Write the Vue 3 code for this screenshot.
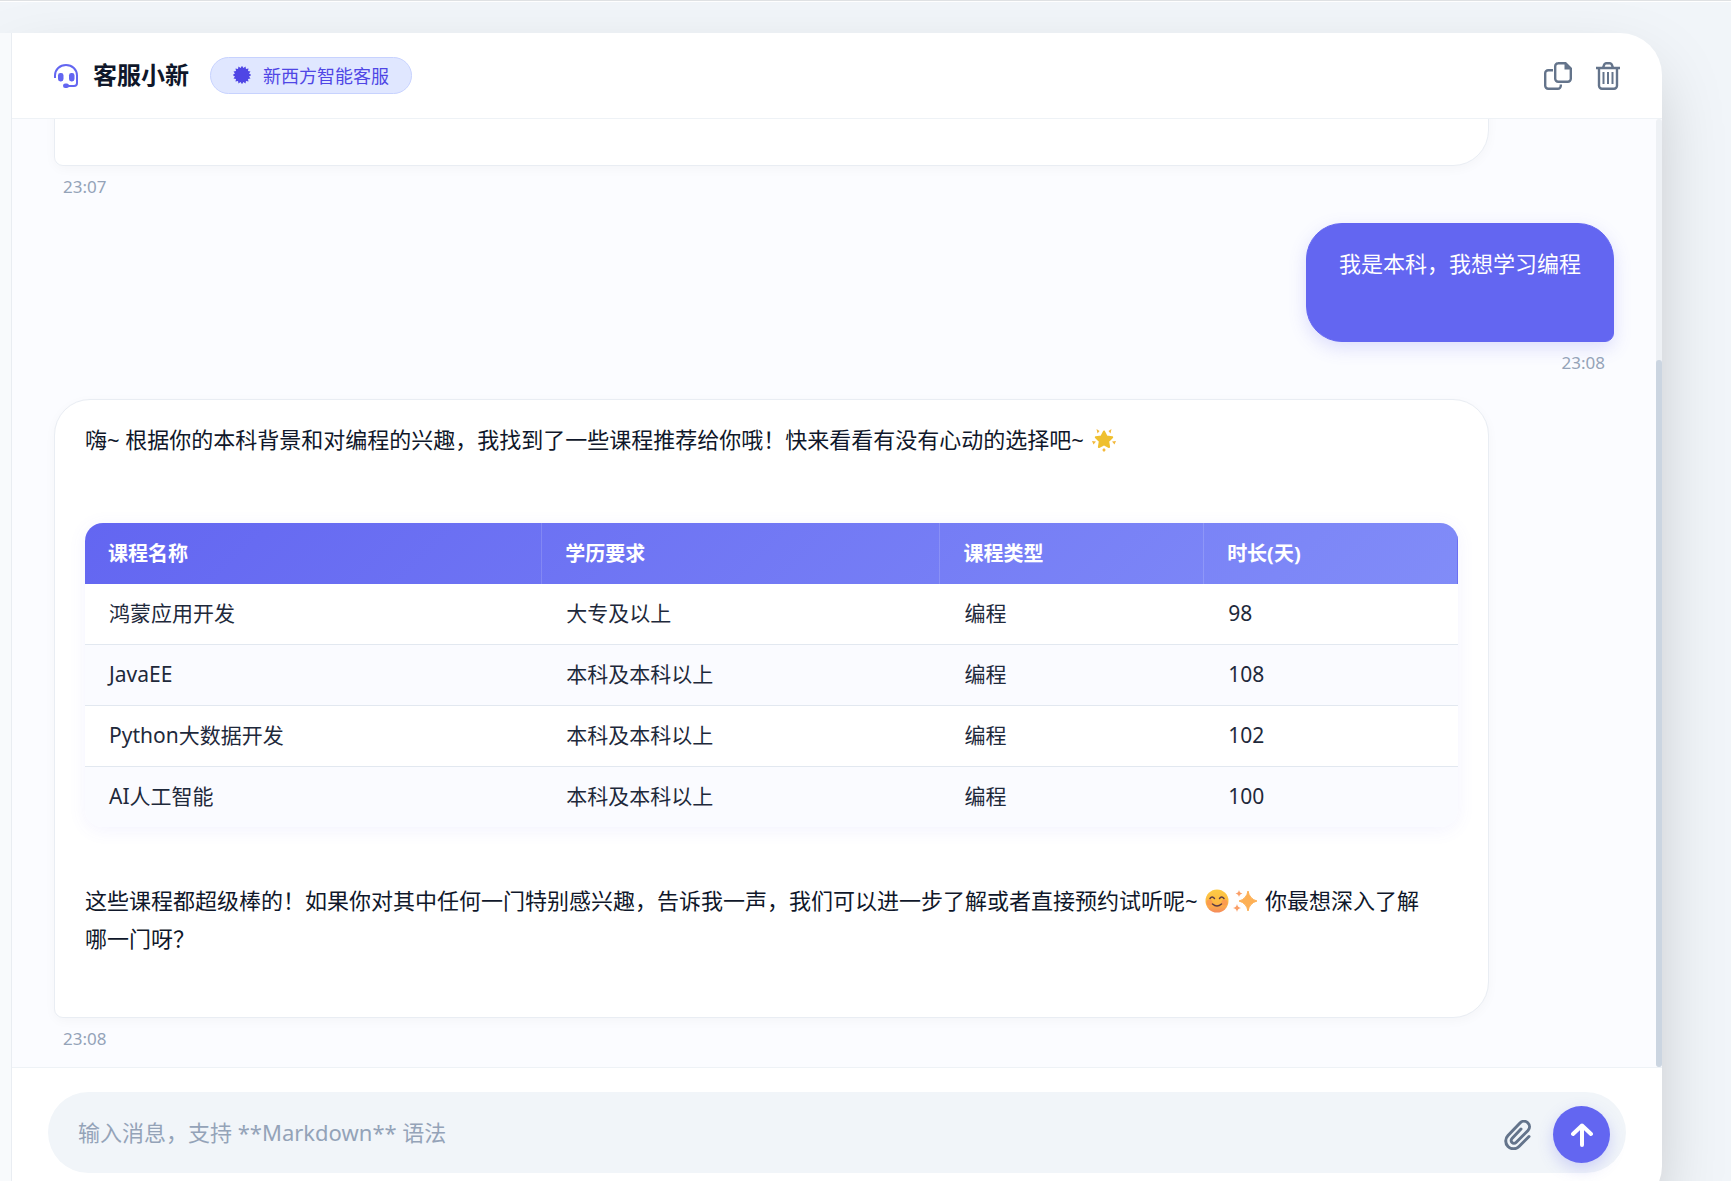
<template>
  <div class="page">
    <div class="window">
      <aside class="sidebar"></aside>
      <main class="chat">
        <header class="chat-header">
          <svg class="logo" viewBox="0 0 24 24" fill="none">
            <path d="M1 14v-2.500C1 5.500 5.800 1 12 1s11 4.500 11 10.500V19a3 3 0 0 1-3 3h-6" stroke="#6366f1" stroke-width="2" />
            <rect x="4" y="9" width="5.500" height="8.500" rx="2.400" fill="#6366f1" />
            <rect x="15" y="9" width="5.500" height="8.500" rx="2.400" fill="#6366f1" />
            <rect x="9" y="19.500" width="6" height="4.500" rx="2.200" fill="#6366f1" />
          </svg>
          <h1 class="title">客服小新</h1>
          <span class="badge">
            <svg width="18" height="18" viewBox="0 0 18 18">
              <polygon :points="sealPoints" fill="#4f46e5" />
            </svg>
            新西方智能客服
          </span>
          <div class="actions">
            <button class="icon-btn" type="button" aria-label="复制对话">
              <svg width="28" height="28" viewBox="0 0 28 28" fill="none" stroke="#64748b" stroke-width="2.400">
                <path d="M9 8.200H4.200a3 3 0 0 0-3 3v12.600a3 3 0 0 0 3 3h9.600a3 3 0 0 0 3-3v-1.300" />
                <path d="M14 1.200h7.500l5.300 5.300v10.300a3 3 0 0 1-3 3H14.200a3 3 0 0 1-3-3V4.200a3 3 0 0 1 3-3z" />
                <path d="M20.500 1v6.500h6.500z" fill="#64748b" stroke="none" />
              </svg>
            </button>
            <button class="icon-btn" type="button" aria-label="清空对话">
              <svg width="24" height="28" viewBox="0 0 24 28" fill="none" stroke="#64748b" stroke-width="2.400">
                <path d="M0 6h24M3 6v17.800a3 3 0 0 0 3 3h12a3 3 0 0 0 3-3V6" />
                <path d="M7 6l1-2.800a2.500 2.500 0 0 1 2-2h4a2.500 2.500 0 0 1 2 2l1 2.800" />
                <path d="M7.500 10v12M12 10v12M16.500 10v12" stroke-width="2" />
              </svg>
            </button>
          </div>
        </header>

        <section class="body">
          <div class="messages">
            <article class="message">
              <div class="bubble"><p>&nbsp;</p></div>
              <time>23:07</time>
            </article>

            <article class="message user">
              <div class="bubble"><p>我是本科，我想学习编程</p></div>
              <time>23:08</time>
            </article>

            <article class="message">
              <div class="bubble">
                <p>
                  嗨~ 根据你的本科背景和对编程的兴趣，我找到了一些课程推荐给你哦！快来看看有没有心动的选择吧~
                  <svg class="emoji" viewBox="0 0 24 24" role="img" aria-label="🌟">
                    <path d="M12 3.500l2.600 5 5.600.8-4 4 .9 5.700-5.100-2.600L6.900 19l.9-5.700-4-4 5.600-.8z" fill="#efc02f" stroke="#efc02f" stroke-width="2" stroke-linejoin="round" />
                    <path d="M4.500 1l3 2-2 2.500zM19.500 1l-3 2 2 2.500zM0 13l4 .5-2.500 3zM24 13l-4 .5 2.500 3zM12 20l1.800 2-1.800 2-1.800-2z" fill="#f3b93c" />
                  </svg>
                </p>
                <table>
                  <thead>
                    <tr><th v-for="h in headers" :key="h">{{ h }}</th></tr>
                  </thead>
                  <tbody>
                    <tr v-for="row in courses" :key="row[0]">
                      <td v-for="(cell, i) in row" :key="i">{{ cell }}</td>
                    </tr>
                  </tbody>
                </table>
                <p>
                  这些课程都超级棒的！如果你对其中任何一门特别感兴趣，告诉我一声，我们可以进一步了解或者直接预约试听呢~
                  <svg class="emoji" viewBox="0 0 24 24" role="img" aria-label="😊">
                    <defs>
                      <linearGradient id="face" x1="0" y1="0" x2="0" y2="1">
                        <stop stop-color="#fdcb45" />
                        <stop offset=".6" stop-color="#fdb843" />
                        <stop offset="1" stop-color="#f58a5c" />
                      </linearGradient>
                    </defs>
                    <circle cx="12" cy="12" r="11.500" fill="url(#face)" />
                    <circle cx="4.500" cy="13.500" r="3" fill="#f9805a" opacity=".5" />
                    <circle cx="19.500" cy="13.500" r="3" fill="#f9805a" opacity=".5" />
                    <path d="M5 9.500q2-3 4.500 0M14.500 9.500q2-3 4.500 0M7.500 15q4.500 4 9 0" fill="none" stroke="#5b3a44" stroke-width="1.500" stroke-linecap="round" />
                  </svg>
                  <svg class="emoji" viewBox="0 0 24 24" role="img" aria-label="✨">
                    <path d="M15 2q1.500 8 9 10-7.500 2-9 10-1.500-8-9-10 7.500-2 9-10z" fill="#fdb055" stroke="#fdb055" stroke-linejoin="round" />
                    <path d="M6 1q.5 3 3.500 3.500Q6.500 5 6 8q-.5-3-3.500-3.500Q5.500 4 6 1zM4 15q.5 3.500 4 4-3.500.5-4 4-.5-3.500-4-4 3.500-.5 4-4z" fill="#fa9f68" />
                  </svg>
                  你最想深入了解<br />哪一门呀？
                </p>
              </div>
              <time>23:08</time>
            </article>
          </div>
          <div class="scroll-track"><div class="scroll-thumb"></div></div>
        </section>

        <footer class="composer">
          <form class="input-box" @submit.prevent="draft = ''">
            <input v-model="draft" type="text" aria-label="消息" placeholder="输入消息，支持 **Markdown** 语法" />
            <div class="tools">
              <button class="icon-btn" type="button" aria-label="添加附件">
                <svg width="28" height="30" viewBox="0 0 28 30" fill="none" stroke="#64748b" stroke-width="3" stroke-linecap="round" stroke-linejoin="round">
                  <path d="M17 9L8 18.500a2.500 2.500 0 0 0 4 4L24 10.500a5 5 0 0 0-8-7.500L4 15.500a7.500 7.500 0 0 0 11 11L25 16.500" />
                </svg>
              </button>
              <button class="send" type="submit" aria-label="发送">
                <svg width="22" height="24" viewBox="0 0 22 24" fill="none" stroke="#fff" stroke-width="4" stroke-linecap="round" stroke-linejoin="round">
                  <path d="M11 22V2.500M2 11l9-8.500 9 8.500" />
                </svg>
              </button>
            </div>
          </form>
        </footer>
      </main>
    </div>
  </div>
</template>

<script setup>
import { ref } from 'vue';

const draft = ref('');

const headers = ['课程名称', '学历要求', '课程类型', '时长(天)'];
const courses = [
  ['鸿蒙应用开发', '大专及以上', '编程', '98'],
  ['JavaEE', '本科及本科以上', '编程', '108'],
  ['Python大数据开发', '本科及本科以上', '编程', '102'],
  ['AI人工智能', '本科及本科以上', '编程', '100'],
];

// 徽章图标的锯齿圆
const teeth = 16;
const sealPoints = Array.from({ length: teeth * 2 }, (_, i) => {
  const r = i % 2 ? 7.2 : 9.2;
  const a = (i * Math.PI) / teeth;
  return `${(9 + r * Math.sin(a)).toFixed(2)},${(9 - r * Math.cos(a)).toFixed(2)}`;
}).join(' ');
</script>

<style>
body {
  margin: 0;
  background: #f1f5f9;
}
</style>

<style scoped>
* {
  box-sizing: border-box;
}
.page {
  height: 100vh;
  padding: 32px 69px 0 0;
  overflow: hidden;
  border-top: 1px solid #dfe1e3;
  box-shadow: inset 0 1px 0 #fff;
  background: #f1f5f9;
  color: #0f172a;
  font-family: 'Noto Sans', 'Noto Sans CJK SC', sans-serif;
}
.window {
  display: flex;
  height: calc(100vh - 6px);
  border-radius: 0 42px 42px 0;
  background: #fff;
  box-shadow: 0 30px 75px -15px rgba(0, 0, 0, 0.25);
  overflow: hidden;
}
.sidebar {
  width: 12px;
  flex: none;
  background: #f8fafc;
  border-right: 1px solid #e9edf2;
}
.chat {
  flex: 1;
  min-width: 0;
  display: flex;
  flex-direction: column;
}
.chat-header {
  display: flex;
  align-items: center;
  height: 86px;
  flex: none;
  padding: 0 42px;
  border-bottom: 1px solid #eef2f6;
}
.logo {
  width: 24px;
  height: 24px;
}
.title {
  margin: 0 21px 2px 15px;
  font-size: 24px;
  line-height: 36px;
  font-weight: 700;
}
.badge {
  display: flex;
  align-items: center;
  gap: 12px;
  height: 37px;
  padding: 0 22px 2px;
  border: 1px solid #c7d2fe;
  border-radius: 20px;
  background: #e0e7ff;
  color: #4f46e5;
  font-size: 18px;
}
.actions {
  display: flex;
  gap: 24px;
  margin-left: auto;
}
button {
  border: 0;
  padding: 0;
  background: none;
  cursor: pointer;
}
.icon-btn {
  display: flex;
}
.body {
  flex: 1;
  min-height: 0;
  display: flex;
  background: #fbfcff;
}
.messages {
  flex: 1;
  min-width: 0;
  display: flex;
  flex-direction: column;
  justify-content: flex-end;
  gap: 24px;
  padding: 0 42px 16px;
  overflow: hidden;
}
.message {
  display: flex;
  flex-direction: column;
  align-items: flex-start;
  gap: 8px;
}
.message.user {
  align-items: flex-end;
}
.bubble {
  width: 92%;
  padding: 20px 30px 60px;
  border: 1px solid #e9edf3;
  border-radius: 36px 36px 36px 9px;
  background: #fff;
  box-shadow: 0 3px 12px rgba(15, 23, 42, 0.03);
  font-size: 22px;
  line-height: 38px;
}
.user .bubble {
  width: auto;
  max-width: 92%;
  padding: 20px 32px 59px;
  border-color: #6366f1;
  border-radius: 36px 36px 9px 36px;
  background: #6366f1;
  box-shadow: 0 6px 18px rgba(99, 102, 241, 0.2);
  color: #fff;
}
.bubble p {
  margin: 0;
}
time {
  padding: 0 9px;
  color: #94a3b8;
  font-size: 17px;
  line-height: 25px;
}
.emoji {
  width: 24px;
  height: 24px;
  margin: 0 2px;
  vertical-align: -4px;
}
table {
  width: 100%;
  margin: 65px 0 54px;
  border-spacing: 0;
  table-layout: fixed;
  border-radius: 18px;
  overflow: hidden;
  box-shadow: 0 3px 18px rgba(99, 102, 241, 0.08);
  font-size: 21px;
  line-height: 28px;
}
thead tr {
  background: linear-gradient(135deg, #6366f1, #818cf8);
}
th,
td {
  height: 61px;
  padding: 0 24px 2px;
  text-align: left;
}
th {
  padding: 1px 23px 0;
  border-right: 1px solid rgba(255, 255, 255, 0.15);
  color: #fff;
  font-size: 20px;
  font-weight: 700;
}
th:last-child {
  border-right-color: #6c70f2;
}
th:nth-child(1) {
  width: 33.3%;
}
th:nth-child(2) {
  width: 29%;
}
th:nth-child(3) {
  width: 19.2%;
}
td {
  border-bottom: 1px solid #e2e8f0;
  color: #1e293b;
}
tbody tr:nth-child(even) {
  background: #fafbff;
}
tbody tr:last-child td {
  height: 60px;
  border-bottom: 0;
}
.scroll-track {
  width: 6px;
  display: flex;
  align-items: flex-end;
  border-radius: 3px;
  background: #eef1f5;
}
.scroll-thumb {
  width: 100%;
  height: 74.6%;
  border-radius: 3px;
  background: #cbd5e1;
}
.composer {
  flex: none;
  padding: 24px 36px 35px;
  border-top: 1px solid #eef2f6;
}
.input-box {
  display: flex;
  align-items: center;
  height: 81px;
  padding: 0 16px 0 30px;
  border-radius: 42px;
  background: #f1f5f9;
}
.input-box input {
  flex: 1;
  min-width: 0;
  padding: 0 0 2px;
  border: 0;
  outline: 0;
  background: none;
  color: inherit;
  font-family: inherit;
  font-size: 22px;
  line-height: 38px;
}
.input-box input::placeholder {
  color: #94a3b8;
  opacity: 1;
}
.tools {
  display: flex;
  align-items: center;
  gap: 21px;
  padding-top: 4px;
}
.send {
  display: flex;
  align-items: center;
  justify-content: center;
  width: 57px;
  height: 57px;
  border-radius: 50%;
  background: #6366f1;
  box-shadow: 0 6px 15px rgba(99, 102, 241, 0.25);
}
</style>
